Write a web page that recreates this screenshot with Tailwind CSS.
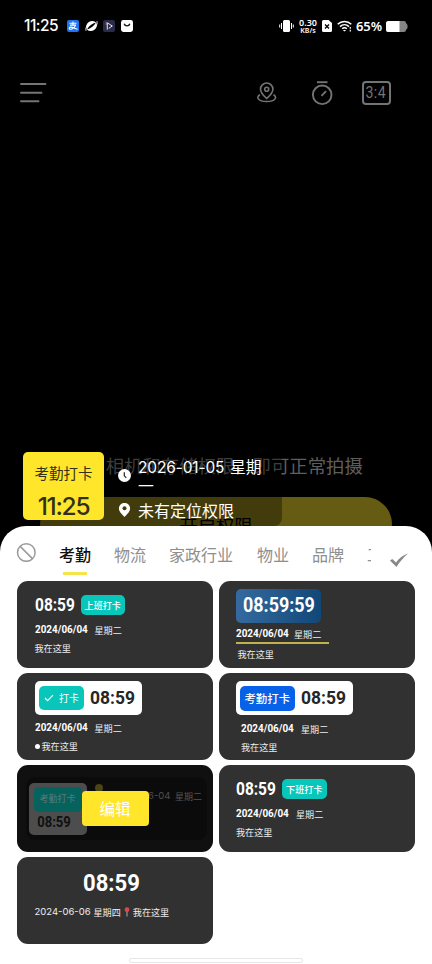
<!DOCTYPE html>
<html lang="zh-CN">
<head>
<meta charset="utf-8">
<title>考勤打卡</title>
<script src="https://cdn.jsdelivr.net/npm/@tailwindcss/browser@4"></script>
</head>
<body class="bg-black">
<div class="relative flex h-[964px] w-[432px] flex-col overflow-hidden bg-black font-['Noto_Sans_CJK_SC',sans-serif] whitespace-nowrap">

  <!-- Status bar -->
  <header class="flex h-[52px] shrink-0 items-center pl-6 text-white">
    <span class="block w-[43px] font-['Inter',sans-serif] text-[15.500px] leading-5 font-medium tracking-[-0.5px]">11:25</span>
    <svg class="h-3 w-3" viewBox="0 0 12 12"><rect width="12" height="12" rx="2" fill="#1f74f0"/><path d="M2.500 3.300h7M6 1.600v3.500M3 5.100h5.500C7.800 7.500 5.200 9.300 3.400 9.200 1.600 9 2 7 3.800 7.100 6 7.200 7.700 8.700 10.500 9.200" fill="none" stroke="#fff" stroke-width="1.100"/></svg>
    <svg class="ml-[5.500px] h-3 w-[13px]" viewBox="0 0 13 12"><ellipse cx="6.500" cy="6" rx="5.600" ry="4.800" transform="rotate(-38 6.500 6)" fill="#fff"/><path d="M2.400 9.200C4.800 8.800 9.500 6 10.600 2.800 7.800 3.200 3.300 6.200 2.400 9.200Z" fill="#000"/><path d="M1 10.800C.2 8 2 5.500 3.500 4M12 1.200c.6 2.500-.5 5-2.500 6.800" fill="none" stroke="#fff" stroke-width=".9"/></svg>
    <svg class="ml-[5.500px] h-3 w-3" viewBox="0 0 12 12"><rect width="12" height="12" rx="2" fill="#2a2b4b"/><path d="M4.300 9.600V2.800L9.300 6 5.800 8.300" fill="none" stroke="#e6e6f2" stroke-width="1"/><path d="M3.200 2v3" stroke="#d88" stroke-width=".7"/></svg>
    <svg class="ml-[6px] h-3 w-3" viewBox="0 0 12 12"><rect width="12" height="12" rx="2.400" fill="#fff"/><path d="M3.200 3.800c.8 2.800 4.800 2.800 5.600 0" fill="none" stroke="#111" stroke-width="1.400"/></svg>
    <svg class="ml-[146px] h-[14px] w-[15px]" viewBox="0 0 15 14"><rect x="4" y="1" width="7" height="12" rx="1.500" fill="#fff"/><path d="M2.500 4v6M.7 5.500v3M12.500 4v6M14.300 5.500v3" stroke="#fff" stroke-width="1"/></svg>
    <div class="ml-[4px] flex w-[20px] flex-col items-center font-['Noto_Sans',sans-serif] font-semibold">
      <span class="text-[9px] leading-[8px]">0.30</span>
      <span class="text-[7px] leading-[7px]">KB/s</span>
    </div>
    <svg class="ml-[4px] h-3 w-[10px]" viewBox="0 0 10 12"><path d="M1.500 0H6.500L10 3v7.500A1.500 1.500 0 0 1 8.500 12h-7A1.500 1.500 0 0 1 0 10.500v-9A1.500 1.500 0 0 1 1.500 0Z" fill="#fff"/><path d="M3 4.500 7 8.500M7 4.500 3 8.500" stroke="#000" stroke-width="1.300"/></svg>
    <svg class="ml-[5px] h-3 w-[15px]" viewBox="0 0 15 12"><path d="M.7 4.300C4.500.5 10.500.5 14.300 4.300M3 6.600c2.600-2.500 6.400-2.500 9 0M5.200 8.800c1.300-1.300 3.300-1.300 4.600 0" fill="none" stroke="#fff" stroke-width="1.500"/><path d="m5.800 9.900 1.700 1.700 1.700-1.700Z" fill="#fff"/><path d="M13.300 7v5" stroke="#fff" stroke-width="1.200" stroke-dasharray="1.800 1"/></svg>
    <span class="ml-[4px] block w-[30px] font-['Noto_Sans',sans-serif] text-[13px] leading-5 font-semibold tracking-[-0.100px]">65%</span>
    <svg class="h-[11px] w-[22px]" viewBox="0 0 22 11"><path d="M2.500 0h15.500a2 2 0 0 1 2 2l1.500 2v3L20 9a2 2 0 0 1-2 2H2.500A2.500 2.500 0 0 1 0 8.500v-6A2.500 2.500 0 0 1 2.500 0Z" fill="#858585"/><path d="M2.500 0H13.500v11H2.500A2.500 2.500 0 0 1 0 8.500v-6A2.500 2.500 0 0 1 2.500 0Z" fill="#fff"/></svg>
  </header>

  <!-- Camera toolbar -->
  <nav class="flex h-[82px] shrink-0 items-center pl-5">
    <svg class="h-[22px] w-[27px]" viewBox="0 0 27 22"><path d="M1 2h24.500M1 10.700h20.500M1 19.300h17.500" stroke="#747474" stroke-width="1.900" stroke-linecap="round"/></svg>
    <svg class="ml-[209px] h-[22px] w-[22px]" viewBox="0 0 22 22" fill="none" stroke="#747474" stroke-width="1.600"><path d="M10.700 16.500C7.500 13.500 4.500 11 4.500 7.200a6.200 6.200 0 0 1 12.400 0c0 3.800-3 6.300-6.200 9.300Z"/><circle cx="10.700" cy="7.300" r="2"/><path d="M4 12.800C-.2 14.800 1.500 19.500 10.700 19.500s10.900-4.700 6.700-6.700"/></svg>
    <svg class="ml-[33px] h-[26px] w-[22px]" viewBox="0 0 22 26" fill="none" stroke="#747474" stroke-width="1.900"><path d="M6 2.200h10.500"/><circle cx="11.200" cy="14.800" r="9.300"/><path d="m10.500 15.800 4.600-4.600"/></svg>
    <div class="ml-[29px] flex h-[24px] w-[28.500px] items-center justify-center rounded-[4px] border-2 border-[#747474] font-['Roboto',sans-serif] text-[16px] leading-none tracking-[0.600px] text-[#747474]"><span class="scale-x-[.88]">3:4</span></div>
  </nav>

  <main class="h-[392px] shrink-0"></main>

  <!-- Permission prompt behind the watermark -->
  <p class="absolute top-[453px] left-[69px] text-[18.380px] leading-6 text-[#5e5e5e]">开启相机和存储权限，即可正常拍摄</p>
  <div class="absolute top-[497px] left-[40px] h-[54px] w-[352px] rounded-[27px] bg-[#665b13] pt-[16px] text-center text-[18.300px] leading-6 text-black">开启权限</div>

  <!-- Watermark -->
  <section class="absolute top-[452px] left-[23px] flex h-[74px] w-[259px] rounded-lg bg-black/35 text-white">
    <div class="flex h-[68px] w-[81px] flex-col items-center rounded-[5px] bg-[#ffe62b] text-[#333018]">
      <span class="mt-[11px] text-[14.500px] leading-5">考勤打卡</span>
      <span class="mt-[9px] font-['Inter',sans-serif] text-[24.500px] leading-7 font-medium tracking-[-1.300px]">11:25</span>
    </div>
    <div class="ml-[14px] pt-[6px]">
      <div class="flex items-start">
        <svg class="mt-[11px] h-[13px] w-[13px]" viewBox="0 0 13 13"><circle cx="6.500" cy="6.500" r="6.500" fill="#fff"/><path d="M6.300 3.200v3.600l2 2" fill="none" stroke="#222" stroke-width="1.200"/></svg>
        <div class="ml-[7px] text-[15.800px] leading-[18px]"><span class="inline-block w-[92px] font-['Inter',sans-serif] text-[15.500px] tracking-[-0.150px]">2026-01-05</span><span>星期</span><br>一</div>
      </div>
      <div class="mt-[5px] flex h-5 items-center">
        <svg class="h-[14px] w-[13px]" viewBox="0 0 13 14"><path d="M6.500 14C3 10.500.9 8.500.9 5.500a5.600 5.600 0 0 1 11.200 0c0 3-2.100 5-5.600 8.500Z" fill="#fff"/><circle cx="6.500" cy="5.300" r="2" fill="#443c0e"/></svg>
        <span class="ml-[7px] text-[16px] leading-5">未有定位权限</span>
      </div>
    </div>
  </section>

  <!-- Template sheet -->
  <section class="relative flex grow flex-col rounded-t-[26px] bg-white">
    <div class="flex h-[55px] items-start pt-[16px] pl-[16px]">
      <svg class="h-5 w-5 shrink-0" viewBox="0 0 20 20" fill="none" stroke="#9a9a9a" stroke-width="1.500"><circle cx="10.300" cy="10.500" r="8.800"/><path d="m4.200 4.400 12.200 12.200"/></svg>
      <div class="ml-[23px] flex w-[312px] shrink-0 gap-[24px] overflow-hidden text-[16px] leading-6 text-[#8e8e8e]">
        <span class="flex w-8 shrink-0 flex-col items-center font-medium text-[#111]">考勤<i class="mt-[6px] block h-[3px] w-6 bg-[#f7e34a]"></i></span>
        <span class="-ml-px shrink-0">物流</span>
        <span class="-ml-px shrink-0">家政行业</span>
        <span class="shrink-0">物业</span>
        <span class="-ml-px shrink-0">品牌</span>
        <span class="-ml-px shrink-0">工程</span>
      </div>
      <svg class="mt-[10px] ml-[18px] h-[16px] w-[20px] shrink-0" viewBox="0 0 20 16"><path d="M1 8.500 3.300 7 7 10.500C10 6.500 14 3 19 1.500 14.500 5.500 10.500 10 7.500 15Z" fill="#888"/></svg>
    </div>

    <div class="grid grid-cols-[196px_196px] gap-x-[6px] gap-y-[5.500px] pl-[17px] text-[9.100px] leading-[12px] text-[#eee]">

      <article class="flex h-[86.600px] flex-col rounded-[11px] bg-[#313131] pt-[14px] pl-[17.500px]">
        <div class="flex h-5 items-center">
          <span class="block w-[46px] font-['Roboto',sans-serif] text-[18px] leading-5 font-bold text-white"><span class="inline-block origin-left scale-x-[.86]">08:59</span></span>
          <span class="flex h-5 w-[44.500px] items-center justify-center rounded-[5px] bg-[#08c7ba] font-medium text-white">上班打卡</span>
        </div>
        <div class="mt-[9px] flex h-3 items-center"><span class="block w-[60px] font-['Roboto',sans-serif] text-[11px] font-bold text-white"><span class="inline-block origin-left scale-x-[.9]">2024/06/04</span></span>星期二</div>
        <p class="mt-[6px]">我在这里</p>
      </article>

      <article class="flex h-[86.600px] flex-col rounded-[11px] bg-[#313131] pt-[8px] pl-[17px]">
        <div class="flex h-[34px] w-[85px] items-center rounded-[5px] bg-gradient-to-r from-[#356a9f] to-[#104878] pl-[7px] font-['Roboto',sans-serif] text-[19.500px] leading-5 font-bold text-white"><span class="inline-block origin-left scale-x-[.92]">08:59:59</span></div>
        <div class="mt-[5px] flex h-3 items-center"><span class="block w-[58px] font-['Roboto',sans-serif] text-[11px] font-bold text-white"><span class="inline-block origin-left scale-x-[.9]">2024/06/04</span></span>星期二</div>
        <i class="mt-[2px] block h-[2px] w-[93px] bg-[#c1b24d]"></i>
        <p class="mt-[4px] ml-[1.500px]">我在这里</p>
      </article>

      <article class="flex h-[86.600px] flex-col rounded-[11px] bg-[#313131] pt-[8px] pl-[17.500px]">
        <div class="flex h-[34px] w-[107.500px] items-center rounded-[5px] bg-white pl-[4.500px]">
          <span class="flex h-6 w-[45px] items-center rounded-[5px] bg-[#08c7ba] pl-[5px] text-[10px] text-white"><svg class="mr-[5px] h-2 w-[10px]" viewBox="0 0 10 8"><path d="m1 4 2.600 2.700L9 1.200" fill="none" stroke="#fff" stroke-width="1.200"/></svg>打卡</span>
          <span class="ml-[6px] inline-block origin-left scale-x-[.92] font-['Roboto',sans-serif] text-[19px] leading-5 font-bold text-[#262626]">08:59</span>
        </div>
        <div class="mt-[7px] flex h-3 items-center"><span class="block w-[60px] font-['Roboto',sans-serif] text-[11px] font-bold text-white"><span class="inline-block origin-left scale-x-[.9]">2024/06/04</span></span>星期二</div>
        <p class="mt-[6px] flex items-center"><i class="mr-[2px] block h-[5px] w-[5px] rounded-full bg-white"></i>我在这里</p>
      </article>

      <article class="flex h-[86.600px] flex-col rounded-[11px] bg-[#313131] pt-[8px] pl-[17px]">
        <div class="flex h-[34px] w-[117px] items-center rounded-[5px] bg-white pl-[3.500px]">
          <span class="flex h-[25px] w-[55.500px] items-center justify-center rounded-[5px] bg-[#0862e8] text-[11.400px] font-medium text-white">考勤打卡</span>
          <span class="ml-[6px] inline-block origin-left scale-x-[.92] font-['Roboto',sans-serif] text-[19px] leading-5 font-bold text-[#262626]">08:59</span>
        </div>
        <div class="mt-[8px] ml-[5px] flex h-3 items-center"><span class="block w-[60px] font-['Roboto',sans-serif] text-[11px] font-bold text-white"><span class="inline-block origin-left scale-x-[.9]">2024/06/04</span></span>星期二</div>
        <p class="mt-[6px] ml-[5px]">我在这里</p>
      </article>

      <article class="relative h-[86.600px] rounded-[11px] bg-[#101010] pt-[11.500px] pl-[9px]">
        <div class="flex h-[63px] w-[181px] rounded-[9px] bg-[#0b0b0b] pt-[6px] pl-[2.500px]">
          <div class="flex h-[52px] w-[58px] flex-col items-center rounded-[5px] bg-[#4d4d4d] pt-[4px]">
            <span class="flex h-[25px] w-[48px] items-center justify-center rounded-[5px] bg-[#06625c] text-[9px] text-[#5d7a78]">考勤打卡</span>
            <span class="mt-[4px] mr-[6px] inline-block scale-x-[.93] font-['Roboto',sans-serif] text-[14px] leading-3 font-bold text-[#101010]">08:59</span>
          </div>
          <i class="mt-[1px] ml-[8px] block h-[8px] w-[8px] rounded-full bg-[#4b4510]"></i>
          <span class="ml-[8px] block w-[60px] pt-[7.500px] text-right font-['Inter',sans-serif] text-[9.500px] text-[#505050]">2024-06-04</span>
        </div>
        <span class="absolute top-[26px] left-[158px] text-[9px] text-[#555]">星期二</span>
        <button class="absolute top-[26px] left-[64.500px] flex h-[34.500px] w-[67px] items-center justify-center rounded-[4px] bg-[#ffe62b] text-[15.500px] text-white">编辑</button>
      </article>

      <article class="flex h-[86.600px] flex-col rounded-[11px] bg-[#313131] pt-[14px] pl-[17px]">
        <div class="flex h-5 items-center">
          <span class="block w-[46px] font-['Roboto',sans-serif] text-[18px] leading-5 font-bold text-white"><span class="inline-block origin-left scale-x-[.86]">08:59</span></span>
          <span class="flex h-5 w-[44.500px] items-center justify-center rounded-[5px] bg-[#08c7ba] font-medium text-white">下班打卡</span>
        </div>
        <div class="mt-[8.500px] flex h-3 items-center"><span class="block w-[60px] font-['Roboto',sans-serif] text-[11px] font-bold text-white"><span class="inline-block origin-left scale-x-[.9]">2024/06/04</span></span>星期二</div>
        <p class="mt-[6.500px]">我在这里</p>
      </article>

      <article class="flex h-[86.600px] flex-col rounded-[11px] bg-[#313131] pt-[14px] pl-[17.500px]">
        <span class="ml-[48px] inline-block origin-left scale-x-[.9] font-['Roboto',sans-serif] text-[24.500px] leading-6 font-bold text-white">08:59</span>
        <div class="mt-[11px] flex h-3 items-center"><span class="block w-[59px] font-['Inter',sans-serif] text-[9.500px]">2024-06-06</span>星期四
          <svg class="mr-[3px] ml-[3px] h-[10px] w-[6px]" viewBox="0 0 6 10"><path d="M3 4v5.500" stroke="#aaa" stroke-width="1"/><circle cx="3" cy="2.700" r="2.400" fill="#d84a4a"/></svg>我在这里</div>
      </article>
    </div>

    <div class="mt-auto mb-px ml-[129px] h-[5px] w-[174px] rounded-[2px] border border-[#e6e6e6] bg-white"></div>
  </section>
</div>
</body>
</html>
